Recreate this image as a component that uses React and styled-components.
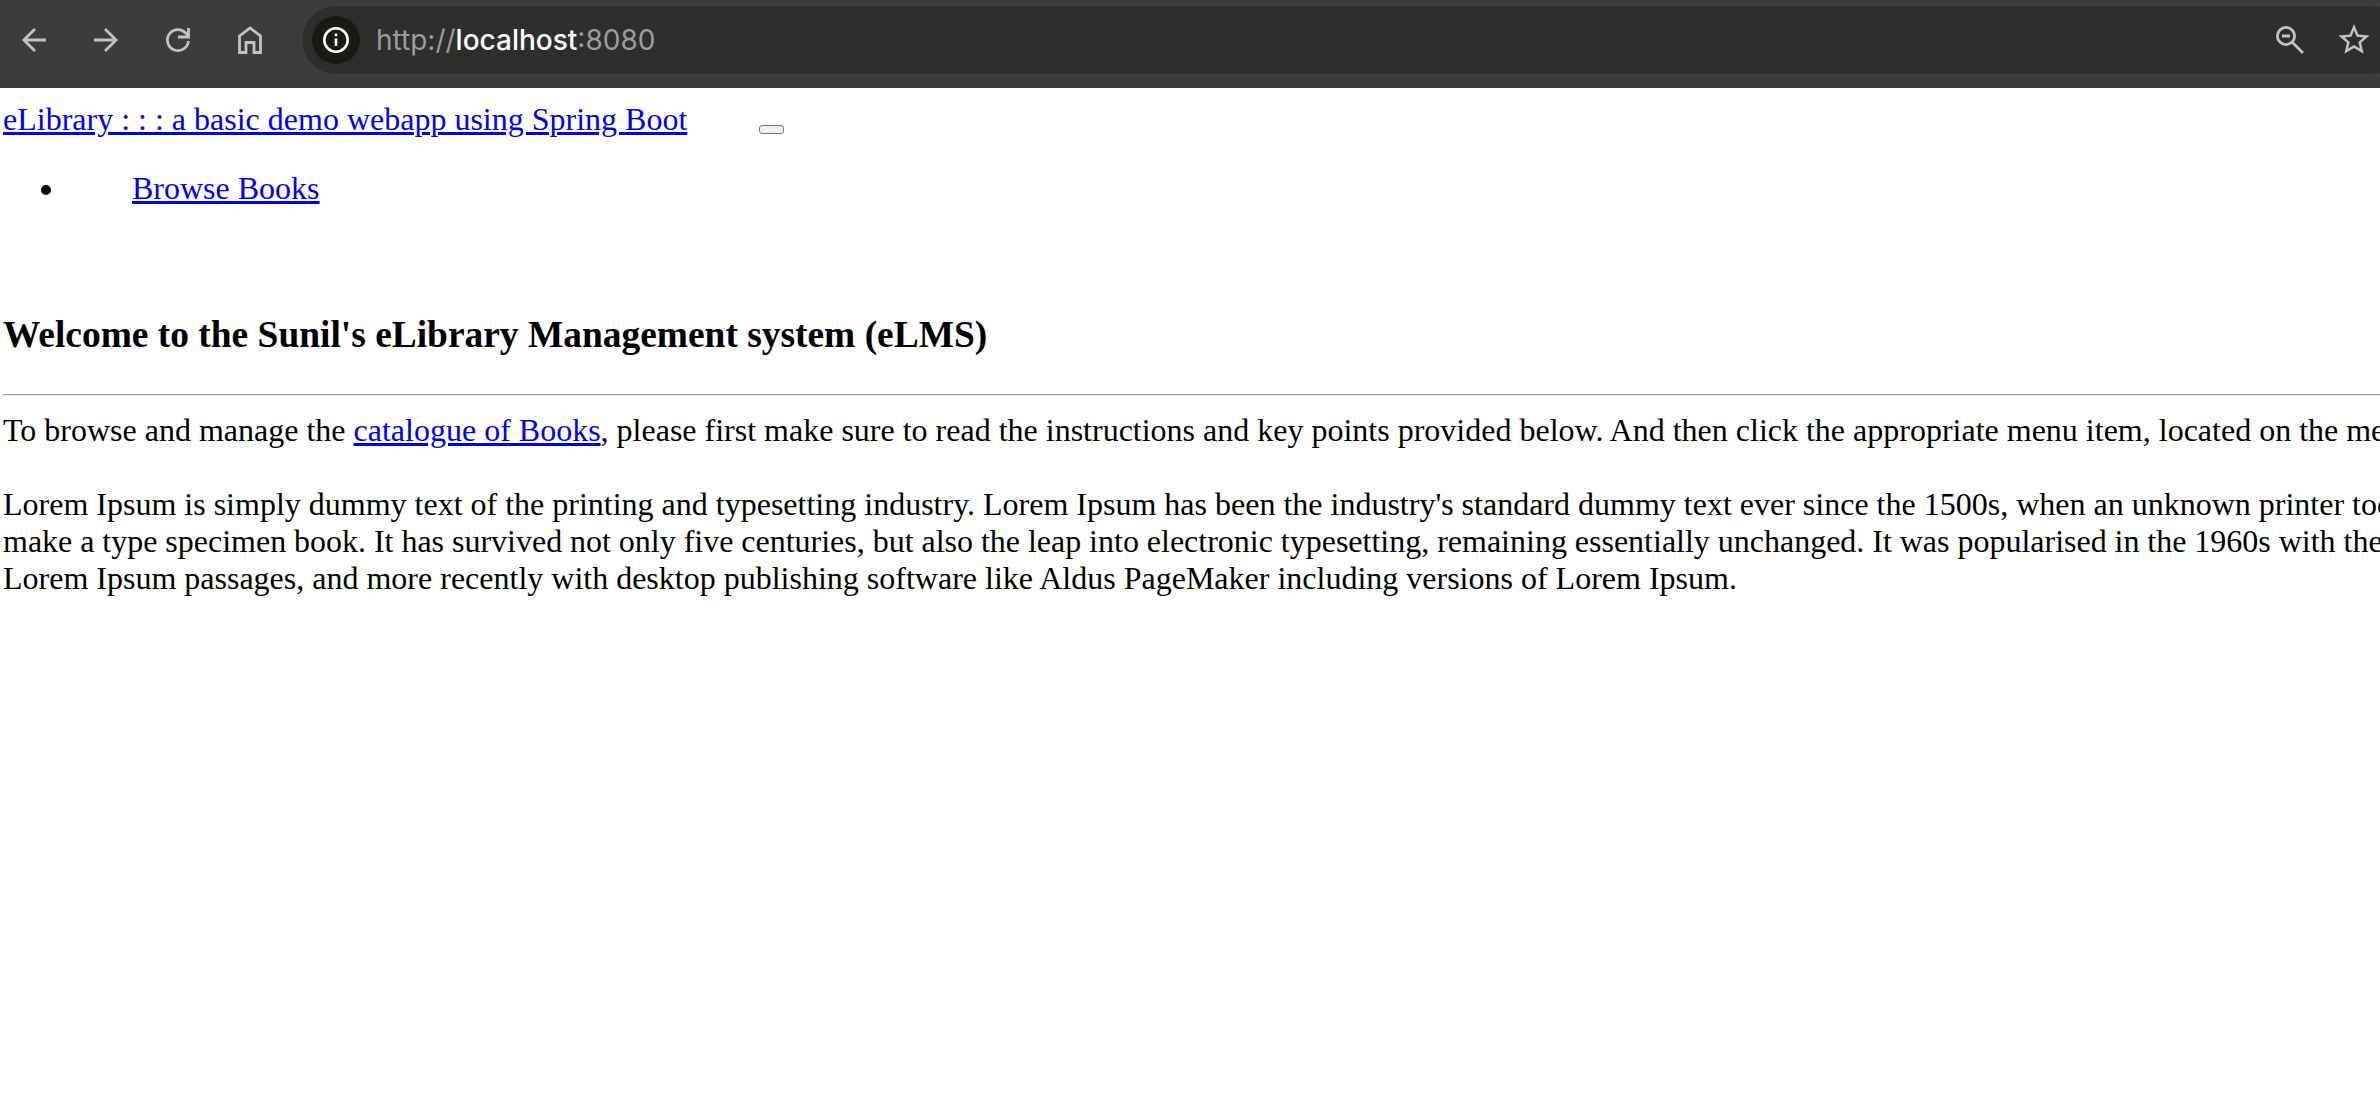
import React from 'react';
import styled, { createGlobalStyle } from 'styled-components';

const Global = createGlobalStyle`
  body { margin: 0; background: #fff; overflow: hidden; }
`;

const Toolbar = styled.header`
  display: flex;
  align-items: flex-start;
  box-sizing: border-box;
  height: 88px;
  padding: 6px 0 0 10px;
  background: #3c3c3c;
  overflow: hidden;
`;

const NavButtons = styled.nav`
  display: flex;
  align-items: center;
  gap: 24px;
  height: 68px;
  margin-right: 28px;
`;

const Icon = styled.svg`
  display: block;
  flex: none;
  width: 48px;
  height: 48px;
  fill: none;
  stroke: ${(p) => p.$color || '#c2c2c2'};
  stroke-width: 2.8;
`;

const AddressBar = styled.div`
  display: flex;
  flex: 1;
  align-items: center;
  box-sizing: border-box;
  height: 68px;
  margin-right: -24px;
  padding: 0 26px 0 10px;
  border-radius: 34px;
  background: #2e2e2c;
`;

const SiteInfo = styled.span`
  width: 48px;
  height: 48px;
  border-radius: 50%;
  background: #191a15;
`;

const Url = styled.span`
  flex: 1;
  margin-left: 16px;
  font: 400 28px/34px Inter, sans-serif;
  color: #9c9c9a;
  white-space: pre;
`;

const Host = styled.span`
  color: #fff;
  font-weight: 500;
`;

const Actions = styled.div`
  display: flex;
  align-items: center;
  gap: 16px;
`;

const Page = styled.main`
  padding: 13px 0 0 3px;
  overflow: hidden;
  color: #000;
  font: 32px/37px "Liberation Serif", serif;
  white-space: nowrap;
`;

const Brand = styled.div`
  display: flex;
  height: 37px;
`;

const Link = styled.a`
  color: #0000ee;
  text-decoration: underline;
  text-decoration-thickness: 3px;
  text-underline-offset: 2px;
`;

const Toggler = styled.button`
  width: 25px;
  height: 9px;
  margin: 24px 0 0 72px;
  padding: 0;
  border: 1px solid #767676;
  border-radius: 3px;
  background: #efefef;
`;

const Menu = styled.ul`
  margin: 32px 0 0;
  padding: 0;
  list-style: none;
`;

const MenuItem = styled.li`
  display: flex;
  align-items: center;
  padding-left: 38px;

  &::before {
    content: '';
    width: 10px;
    height: 10px;
    margin: 3px 81px 0 0;
    border-radius: 50%;
    background: #000;
  }
`;

const Heading = styled.h3`
  margin: 106px 0 0;
  font-size: 37.44px;
  line-height: 43px;
`;

const Rule = styled.hr`
  height: 1px;
  margin: 38px 0 0;
  border: 0;
  border-top: 1px solid #9a9a9a;
  background: #eee;
`;

const Paragraph = styled.p`
  margin: ${(p) => p.$top}px 0 0;
`;

const Words = styled.span`
  word-spacing: ${(p) => p.$spacing}px;
`;

export default function App() {
  return (
    <>
      <Global />
      <Toolbar>
        <NavButtons>
          <Icon viewBox="0 0 48 48"><path d="M36 24H13.5M25 12.9 13.9 24 25 35.1" /></Icon>
          <Icon viewBox="0 0 48 48"><path d="M12 24h22.5M23 12.9 34.1 24 23 35.1" /></Icon>
          <Icon viewBox="0 0 48 48"><path d="M34.4 25A10.5 10.5 0 1 1 31.7 17l3 3.4M34.5 12v9H24" /></Icon>
          <Icon viewBox="0 0 48 48"><path d="M13.5 20 24 12l10.5 8v16.5H28V26.500h-8v10h-6.500z" /></Icon>
        </NavButtons>
        <AddressBar>
          <SiteInfo>
            <Icon viewBox="0 0 48 48" $color="#fff">
              <circle cx="24" cy="24" r="11.7" strokeWidth="2.6" />
              <path d="M24 22.500v7.500M24 17.500v2.700" strokeWidth="2.600" />
            </Icon>
          </SiteInfo>
          <Url>http://<Host>localhost</Host>:8080</Url>
          <Actions>
            <Icon viewBox="0 0 48 48">
              <circle cx="20" cy="20" r="8.600" />
              <path d="M26 26 37 37M16 20h8" />
            </Icon>
            <Icon viewBox="0 0 48 48">
              <g transform="translate(5.300 5) scale(1.560)" fill="#c2c2c2" stroke="none">
                <path d="M22 9.24l-7.190-.620L12 2 9.190 8.630 2 9.240l5.460 4.730L5.820 21 12 17.270 18.180 21l-1.630-7.030L22 9.240zM12 15.400l-3.760 2.270 1-4.280-3.320-2.880 4.380-.380L12 6.100l1.710 4.040 4.380.380-3.320 2.880 1 4.280L12 15.400z" />
              </g>
            </Icon>
          </Actions>
        </AddressBar>
      </Toolbar>
      <Page>
        <Brand>
          <Link href="#">eLibrary : : : a basic demo webapp using Spring Boot</Link>
          <Toggler aria-label="Toggle navigation" />
        </Brand>
        <Menu>
          <MenuItem><Link href="#">Browse Books</Link></MenuItem>
        </Menu>
        <Heading>Welcome to the Sunil's eLibrary Management system (eLMS)</Heading>
        <Rule />
        <Paragraph $top={16}>
          To browse and manage the <Link href="#">catalogue of Books</Link>, please first make sure to read the instructions and key points provided below.<Words $spacing={-2}> </Words>And then click the appropriate menu item, located on the menu
        </Paragraph>
        <Paragraph $top={37}>
          Lorem Ipsum is simply dummy text of the printing and typesetting industry. Lorem Ipsum has been the industry's standard dummy text ever since the 1500s, when an unknown printer took
          <br />
          <Words $spacing={-0.1}>make a type specimen book. It has survived not only five centuries, but also the leap into electronic typesetting, remaining essentially unchanged. It was popularised in the 1960s with the</Words>
          <br />
          Lorem Ipsum passages, and more recently with desktop publishing software like Aldus PageMaker including versions of Lorem Ipsum.
        </Paragraph>
      </Page>
    </>
  );
}
